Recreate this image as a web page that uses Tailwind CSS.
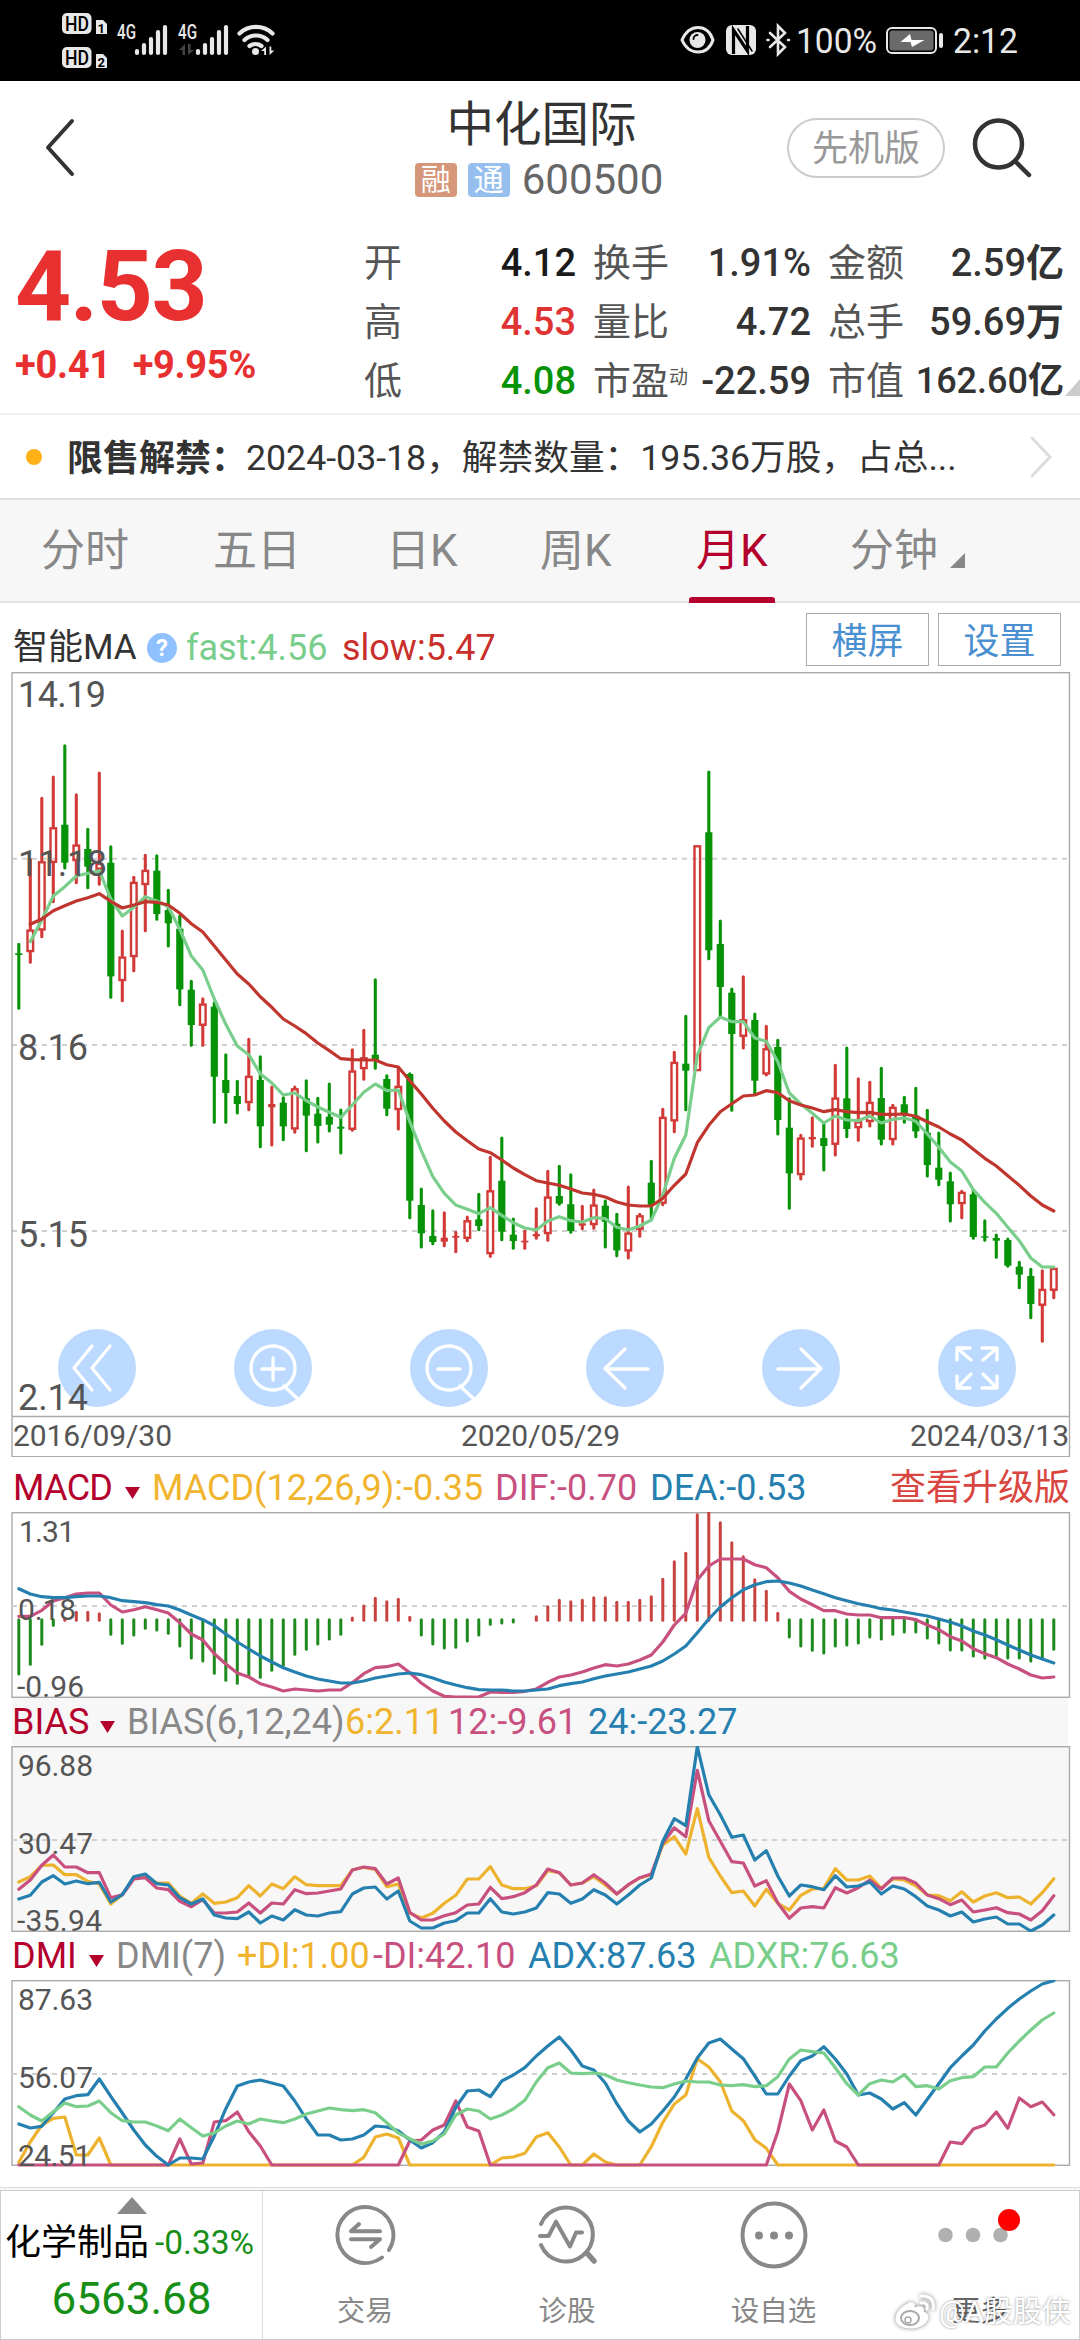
<!DOCTYPE html>
<html lang="zh-CN">
<head>
<meta charset="utf-8">
<title>中化国际 600500</title>
<script src="https://cdn.jsdelivr.net/npm/@tailwindcss/browser@4"></script>
</head>
<body class="w-[1080px] h-[2340px] overflow-hidden bg-white font-[Roboto,'Noto_Sans_CJK_SC',sans-serif] text-[#333]">
<div class="flex flex-col w-[1080px] h-[2340px]">

  <!-- status bar -->
  <div class="h-[81px] shrink-0 bg-black">
    <svg class="block" width="1080" height="81" viewBox="0 0 1080 81" fill="none" stroke-linecap="round">
      <g fill="#e8e8e8">
        <rect x="62" y="13" width="29.500" height="21" rx="5"/><rect x="62" y="47" width="29.500" height="21" rx="5"/>
        <path d="M96 20h7l4 4v10h-11zM96 54h7l4 4v10h-11z"/>
      </g>
      <g fill="#000" font-weight="500" font-family="Roboto">
        <text x="65" y="30.500" font-size="20" textLength="24" lengthAdjust="spacingAndGlyphs">HD</text>
        <text x="65" y="64.500" font-size="20" textLength="24" lengthAdjust="spacingAndGlyphs">HD</text>
        <text x="97.500" y="32.500" font-size="13" font-weight="700">1</text><text x="97.500" y="66.500" font-size="13" font-weight="700">2</text>
      </g>
      <g fill="#e8e8e8" font-size="19.500" font-weight="500" font-family="Roboto">
        <text x="117" y="38.500" textLength="19" lengthAdjust="spacingAndGlyphs">4G</text>
        <text x="178" y="38.500" textLength="19" lengthAdjust="spacingAndGlyphs">4G</text>
      </g>
      <g stroke="#e8e8e8" stroke-width="4.200">
        <path d="M137 51v2M144 45v8M151 39v14M158 32v21M165 27v26"/>
        <path d="M198 51v2M205 45v8M212 39v14M219 32v21M226 27v26"/>
        <path d="M239.500 33.500a24 24 0 0 1 33 0M244.500 40a17 17 0 0 1 23 0M249.500 46a10 10 0 0 1 12 0"/>
      </g>
      <circle cx="255.500" cy="51.500" r="3.500" fill="#e8e8e8"/>
      <path d="M261 51l5-4.500v8.500h-1.800v-4zM269.500 55v-8.500h1.800v4h3z" fill="#e8e8e8"/>
      <path d="M179 50l6-6v11h-2.500v-5zM188 55V44h2.500v6h3.500z" fill="#444"/>
      <!-- right side -->
      <path d="M682 40c4-9 10-12.500 16-12.500s12 3.500 15 12.500c-3 9-9 12-15 12s-12-3-16-12z" stroke="#e8e8e8" stroke-width="3"/>
      <circle cx="697.500" cy="40" r="8" fill="#e8e8e8"/><path d="M693.500 39a4 4 0 0 1 4-4" stroke="#000" stroke-width="1.800"/>
      <rect x="726" y="25" width="30" height="30" rx="6" fill="#e8e8e8"/>
      <path d="M733.500 54V30l14 21V26" stroke="#000" stroke-width="3.200" stroke-linecap="butt"/>
      <path d="M738 29l14 22" stroke="#000" stroke-width="1.500"/>
      <path d="M770 33l15 14-7 7V26l7 7-15 14M767.500 40h1M788 40h1" stroke="#e8e8e8" stroke-width="2.600"/>
      <text x="796" y="53" font-size="35" fill="#e8e8e8" font-family="Roboto" textLength="81" lengthAdjust="spacingAndGlyphs">100%</text>
      <rect x="887" y="28" width="49" height="25" rx="5" fill="#000" stroke="#e8e8e8" stroke-width="2"/>
      <rect x="889.500" y="30.500" width="44" height="20" rx="3" fill="#6a6a6a"/>
      <path d="M941 35v11" stroke="#e8e8e8" stroke-width="4"/>
      <path d="M910 34l1.500 6h13l-12.500 7-1.500-5h-10z" fill="#fff"/>
      <text x="953" y="53" font-size="35" fill="#e8e8e8" font-family="Roboto" textLength="65" lengthAdjust="spacingAndGlyphs">2:12</text>
    </svg>
  </div>

  <!-- title bar -->
  <header class="h-[134px] shrink-0 grid grid-cols-[360px_360px_360px]">
    <div class="pl-[43px] pt-[37px]">
      <svg width="34" height="60" viewBox="0 0 34 60" fill="none" stroke="#333" stroke-width="4" stroke-linecap="round" stroke-linejoin="round"><path d="M29 3L5 29.500L29 56"/></svg>
    </div>
    <div class="flex flex-col items-center">
      <div class="h-[48px] mt-[20px] text-[47.500px] leading-[48px] pl-[3px]">中化国际</div>
      <div class="flex items-center mt-[9px] h-[44px] pr-[2px]">
        <span class="w-[42px] h-[34px] rounded-[4px] bg-[#d5967a] text-white text-[30px] leading-[34px] text-center">融</span>
        <span class="w-[42px] h-[34px] ml-[11px] rounded-[4px] bg-[#97bfee] text-white text-[30px] leading-[34px] text-center">通</span>
        <span class="ml-[12px] text-[42px] leading-[44px] text-[#666]">600500</span>
      </div>
    </div>
    <div class="flex items-start pl-[67px] pt-[37px]">
      <span class="w-[158px] h-[60px] rounded-full border-2 border-[#ccc] text-[36px] leading-[58px] text-center text-[#999]">先机版</span>
      <svg class="ml-[25px]" width="66" height="66" viewBox="0 0 66 66" fill="none" stroke="#333" stroke-width="4.500" stroke-linecap="round"><circle cx="28.500" cy="26" r="23.500"/><path d="M45 43L59 57"/></svg>
    </div>
  </header>

  <!-- quote -->
  <section class="relative h-[200px] shrink-0 border-b-2 border-[#f0f0f0] grid grid-cols-[364px_212px_17px_218px_17px_236px]">
    <div class="pl-[15px] text-[#e93030] font-medium">
      <div class="h-[110px] mt-[17px] text-[98px] leading-[110px] font-bold tracking-[-1.500px]">4.53</div>
      <div class="mt-[3px] text-[38px] leading-[40px] whitespace-pre font-bold tracking-[-0.300px]"><span>+0.41</span><span class="ml-[22px]">+9.95%</span></div>
    </div>
    <div class="flex flex-col pt-[19px] text-[38px] leading-[59px] [&>div]:flex [&>div]:justify-between [&_b]:font-medium">
      <div><span class="text-[#555]">开</span><b class="text-[#1a1a1a]">4.12</b></div>
      <div><span class="text-[#555]">高</span><b class="text-[#e03333]">4.53</b></div>
      <div><span class="text-[#555]">低</span><b class="text-[#069406]">4.08</b></div>
    </div>
    <div></div>
    <div class="flex flex-col pt-[19px] text-[38px] leading-[59px] [&>div]:flex [&>div]:justify-between [&_b]:font-medium whitespace-nowrap">
      <div><span class="text-[#555]">换手</span><b>1.91%</b></div>
      <div><span class="text-[#555]">量比</span><b>4.72</b></div>
      <div><span class="text-[#555] flex">市盈<i class="not-italic text-[19px] leading-[52px]">动</i></span><b>-22.59</b></div>
    </div>
    <div></div>
    <div class="flex flex-col pt-[19px] text-[38px] leading-[59px] [&>div]:flex [&>div]:justify-between [&_b]:font-medium whitespace-nowrap">
      <div><span class="text-[#555]">金额</span><b>2.59<span class="font-bold">亿</span></b></div>
      <div><span class="text-[#555]">总手</span><b>59.69<span class="font-bold">万</span></b></div>
      <div><span class="text-[#555]">市值</span><b class="text-[36px]">162.60<span class="font-bold">亿</span></b></div>
    </div>
    <svg class="absolute right-0 top-[164px]" width="15" height="17"><path d="M15 0V17H0z" fill="#ccc"/></svg>
  </section>

  <!-- notice -->
  <section class="h-[83px] shrink-0 flex items-center pl-[26px] pr-[26px] text-[36px] whitespace-nowrap">
    <span class="size-[16px] rounded-full bg-[#ffb118]"></span>
    <b class="ml-[25px] w-[179px] pt-[4px] font-bold">限售解禁：</b>
    <span class="pt-[4px] text-[35.700px]">2024-03-18，解禁数量：195.36万股，占总...</span>
    <svg class="ml-auto" width="26" height="44" viewBox="0 0 26 44" fill="none" stroke="#ddd" stroke-width="3" stroke-linecap="round"><path d="M4 3L22 22L4 41"/></svg>
  </section>

  <!-- period tabs -->
  <nav class="h-[105px] shrink-0 bg-[#f7f7f7] border-y-2 border-[#e1e1e1] grid grid-cols-[172px_173px_154px_156px_154px_271px] pl-[41px] text-[44px] leading-[103px] text-[#888] whitespace-nowrap">
    <span>分时</span><span>五日</span><span>日K</span><span>周K</span>
    <span class="relative text-[#b4002d]">月K<i class="absolute left-[-7px] bottom-[0px] w-[86px] h-[6px] rounded-t-[3px] bg-[#b4002d]"></i></span>
    <span class="flex items-start">分钟<svg class="ml-[12px] mt-[53px]" width="15" height="15"><path d="M15 0V15H0z" fill="#888"/></svg></span>
  </nav>

  <!-- moving-average legend -->
  <section class="h-[69px] shrink-0 grid grid-cols-[134px_39px_156px_464px_132px_122px] pl-[13px] text-[36px] leading-[90px] whitespace-nowrap">
    <span class="text-[35px]">智能MA</span>
    <span class="mt-[30px] size-[30px] rounded-full bg-[#8fc0ff] text-white text-[24px] leading-[31px] font-bold text-center">?</span>
    <span class="text-[#79ce8b]">fast:4.56</span>
    <span class="text-[#c9302c]">slow:5.47</span>
    <span class="mt-[10px] w-[123px] h-[53px] border border-[#aaa] text-[#4a8fd0] leading-[56px] text-center">横屏</span>
    <span class="mt-[10px] w-[123px] h-[53px] border border-[#aaa] text-[#4a8fd0] leading-[56px] text-center">设置</span>
  </section>

  <svg id="main" class="block shrink-0" width="1080" height="785" viewBox="0 672 1080 785" fill="none" font-family="Roboto"></svg>

  <div class="h-[55px] shrink-0 grid grid-cols-[139px_343px_155px_240px_190px] pl-[13px] text-[36px] leading-[62px] whitespace-nowrap">
    <span class="flex text-[#b4002d]"><span class="w-[112px] tracking-[-0.700px]">MACD</span><svg class="mt-[30px]" width="15" height="13"><path d="M0 0h15L7.500 12z" fill="#b4002d"/></svg></span>
    <span class="text-[#f0b42e]">MACD(12,26,9):-0.35</span>
    <span class="text-[#c8507f]">DIF:-0.70</span>
    <span class="text-[#2580b0]">DEA:-0.53</span>
    <span class="text-[#d9453f]">查看升级版</span>
  </div>
  <svg id="macd" class="block shrink-0" width="1080" height="186" viewBox="0 1512 1080 186" fill="none" font-family="Roboto"></svg>

  <div class="h-[48px] shrink-0 mx-[12px] bg-[#f7f7f7] grid grid-cols-[115px_218px_103px_140px_240px] text-[36px] leading-[49px] whitespace-nowrap">
    <span class="flex text-[#b4002d]"><span class="w-[88px]">BIAS</span><svg class="mt-[23px]" width="15" height="13"><path d="M0 0h15L7.500 12z" fill="#b4002d"/></svg></span>
    <span class="text-[#888]">BIAS(6,12,24)</span>
    <span class="text-[#f0b42e]">6:2.11</span>
    <span class="text-[#c8507f]">12:-9.61</span>
    <span class="text-[#2580b0]">24:-23.27</span>
  </div>
  <svg id="bias" class="block shrink-0" width="1080" height="186" viewBox="0 1746 1080 186" fill="none" font-family="Roboto"></svg>

  <div class="h-[48px] shrink-0 grid grid-cols-[104px_121px_136px_155px_181px_240px] pl-[12px] text-[36px] leading-[49px] whitespace-nowrap">
    <span class="flex text-[#b4002d]"><span class="w-[77px]">DMI</span><svg class="mt-[23px]" width="15" height="13"><path d="M0 0h15L7.500 12z" fill="#b4002d"/></svg></span>
    <span class="text-[#888]">DMI(7)</span>
    <span class="text-[#f0b42e]">+DI:1.00</span>
    <span class="text-[#c8507f]">-DI:42.10</span>
    <span class="text-[#2580b0]">ADX:87.63</span>
    <span class="text-[#79ce8b]">ADXR:76.63</span>
  </div>
  <svg id="dmi" class="block shrink-0" width="1080" height="207" viewBox="0 1980 1080 207" fill="none" font-family="Roboto"></svg>

  <!-- bottom bar -->
  <footer class="relative h-[153px] shrink-0 border-t border-[#ddd] bg-[#f7f7f7] pt-[2px]">
    <div class="h-[150px] border border-[#ccc] bg-white grid grid-cols-[262px_204px_200px_213px_200px]">
      <div class="border-r border-[#ddd] flex flex-col items-center">
        <svg class="mt-[6px]" width="30" height="17"><path d="M15 0L30 17H0z" fill="#888"/></svg>
        <div class="flex items-center h-[44px] mt-[7px] text-[36px] leading-[44px] text-black whitespace-nowrap w-full pl-[4px]">化学制品<span class="ml-[6px] text-[33.500px] text-[#178f17]">-0.33%</span></div>
        <div class="h-[50px] mt-[9px] text-[44px] leading-[50px] text-[#178f17]">6563.68</div>
      </div>
      <div class="flex flex-col items-center text-[28px] text-[#888]">
        <svg class="mt-[9px]" width="70" height="70" viewBox="330 2200 70 70" fill="none" stroke="#888" stroke-width="4" stroke-linecap="round" stroke-linejoin="round"><path d="M389 2250A28 28 0 1 0 382 2257.500"/><path d="M380 2231.300H351L359 2224M351 2239.300H380L371 2247"/></svg>
        <span class="mt-[21px] leading-[42px]">交易</span>
      </div>
      <div class="flex flex-col items-center text-[28.500px] text-[#888]">
        <svg class="mt-[9px]" width="70" height="70" viewBox="533 2200 70 70" fill="none" stroke="#888" stroke-width="4" stroke-linecap="round" stroke-linejoin="round"><path d="M542 2224A27 27 0 1 1 542 2245M541 2236H549.500L557 2221.700L571 2246.500L577 2232.500H583"/><path d="M588 2253L595 2261" stroke-width="5.500"/></svg>
        <span class="mt-[21px] leading-[42px]">诊股</span>
      </div>
      <div class="flex flex-col items-center text-[28.500px] text-[#888]">
        <svg class="mt-[9px]" width="70" height="70" viewBox="737 2200 70 70" fill="#888"><circle cx="772" cy="2235" r="31.500" fill="none" stroke="#888" stroke-width="4"/><circle cx="757" cy="2235.500" r="4"/><circle cx="772" cy="2235.500" r="4"/><circle cx="787" cy="2235.500" r="4"/></svg>
        <span class="mt-[21px] leading-[42px]">设自选</span>
      </div>
      <div class="flex flex-col items-center text-[28px] text-[#666]">
        <svg class="mt-[9px]" width="90" height="70" viewBox="934 2200 90 70"><g fill="#b0b0b0"><circle cx="944.500" cy="2235" r="7.300"/><circle cx="972" cy="2235" r="7.300"/><circle cx="999.500" cy="2235" r="7.300"/></g><circle cx="1008" cy="2220" r="11" fill="#f00"/></svg>
        <span class="mt-[21px] leading-[42px]">更多</span>
      </div>
    </div>
    <div class="absolute left-[893px] top-[105px] flex items-center text-white text-[29px] leading-[38px] whitespace-nowrap">
      <svg class="drop-shadow-[0_0_2px_rgba(0,0,0,0.5)]" width="42" height="38" viewBox="0 0 42 38" fill="none" stroke="#fff" stroke-linecap="round"><path d="M17 10c-9 3-14 10-14 16 0 6 7 9 15 9 9 0 17-5 17-11 0-3-2-4-5-5 2-4-1-7-9-4 1-4 0-6-4-5z" fill="#fff"/><ellipse cx="17" cy="25" rx="9" ry="7" stroke="#aaa" stroke-width="2"/><circle cx="15" cy="27" r="3" stroke="#aaa" stroke-width="1.500"/><path d="M28 10c5-1 7 2 6 6M28 3c9-1 14 5 12 13" stroke-width="3"/></svg>
      <span class="ml-[4px] [text-shadow:0_0_3px_rgba(0,0,0,.45)]">@A股股侠</span>
    </div>
  </footer>
</div>

<script>
const X0 = 18.8, STEP = 11.5;
const x = i => +(X0 + i * STEP).toFixed(1);
const RED = '#d23a38', GREEN = '#079307';
const PINK = '#c8507f', BLUE = '#2580b0', YELLOW = '#edb32f', MINT = '#79ce8b';

const line = (vals, base, color, start = 0) =>
  `<polyline points="${vals.map((v, i) => x(i + start) + ',' + (base + v / 3).toFixed(1)).join(' ')}" stroke="${color}" stroke-width="3.2" stroke-linejoin="round" stroke-linecap="round"/>`;
const grid = y => `<path d="M12 ${y}H1069" stroke="#cfcfcf" stroke-width="2" stroke-dasharray="5 5"/>`;
const label = (t, lx, y, w, size) =>
  `<text x="${lx}" y="${y}" font-size="${size}" fill="#555" textLength="${w}">${t}</text>`;
const frame = (y, h, fill) => `<rect x="12" y="${y}" width="1058" height="${h}" fill="${fill}" stroke="none"/>`;
const border = (y, h) => `<rect x="12" y="${y}" width="1057.5" height="${h}" stroke="#aaa" stroke-width="1.4"/>`;

// high, body top, body bottom, low, colour (r up / g down)
const candles = [
[730,760,765,928,'g'],[475,690,755,790,'r'],[292,485,690,713,'r'],[228,383,487,608,'r'],[134,374,488,507,'g'],
[281,435,482,551,'r'],[385,447,500,566,'g'],[216,490,508,556,'r'],[437,488,829,895,'g'],[690,771,842,905,'r'],
[529,547,770,815,'r'],[463,511,554,695,'r'],[464,512,642,661,'g'],[568,630,670,741,'g'],[646,686,868,917,'g'],
[841,869,975,1039,'g'],[893,912,976,1039,'r'],[905,920,1130,1270,'g'],[1061,1140,1179,1270,'g'],[1141,1188,1212,1242,'g'],
[1015,1129,1208,1232,'r'],[1067,1140,1279,1343,'g'],[1158,1212,1222,1338,'r'],[1190,1208,1279,1322,'g'],[1158,1166,1287,1300,'r'],
[1139,1195,1247,1355,'g'],[1192,1241,1278,1329,'g'],[1149,1250,1274,1296,'g'],[1227,1280,1286,1362,'g'],[1046,1113,1288,1293,'r'],
[988,1073,1106,1141,'r'],[836,1064,1080,1108,'g'],[1124,1137,1226,1247,'g'],[1100,1159,1229,1290,'r'],[1118,1122,1502,1556,'g'],
[1464,1515,1600,1644,'g'],[1529,1608,1626,1634,'g'],[1535,1613,1625,1640,'r'],[1594,1608,1613,1658,'r'],[1548,1562,1615,1625,'r'],
[1480,1558,1578,1592,'g'],[1369,1472,1661,1672,'r'],[1311,1442,1595,1622,'g'],[1554,1604,1623,1648,'g'],[1590,1622,1627,1648,'r'],
[1523,1602,1609,1618,'r'],[1411,1491,1601,1624,'r'],[1396,1488,1511,1516,'g'],[1421,1513,1593,1600,'g'],[1516,1570,1577,1589,'r'],
[1467,1515,1574,1588,'r'],[1500,1517,1565,1644,'g'],[1540,1571,1651,1670,'g'],[1458,1599,1653,1677,'r'],[1540,1547,1588,1612,'r'],
[1381,1448,1515,1560,'g'],[1225,1252,1510,1517,'r'],[1054,1087,1263,1298,'r'],[946,1091,1112,1232,'g'],[437,437,1112,1112,'r'],
[213,397,751,779,'g'],[660,732,861,953,'g'],[864,878,1002,1234,'g'],[827,959,1009,1047,'r'],[939,960,1142,1183,'g'],
[976,1046,1122,1128,'r'],[1018,1041,1260,1305,'g'],[1193,1283,1420,1528,'g'],[1303,1314,1424,1440,'r'],[1250,1311,1318,1342,'r'],
[1267,1314,1338,1413,'g'],[1093,1194,1333,1368,'r'],[1041,1195,1287,1313,'g'],[1133,1265,1283,1324,'r'],[1144,1207,1265,1281,'r'],
[1102,1194,1319,1335,'g'],[1213,1222,1319,1335,'r'],[1189,1213,1240,1270,'g'],[1162,1247,1294,1313,'g'],[1228,1298,1395,1431,'g'],
[1296,1403,1439,1457,'g'],[1416,1444,1513,1566,'g'],[1471,1477,1511,1556,'r'],[1467,1483,1611,1618,'g'],[1559,1609,1613,1624,'g'],
[1602,1614,1622,1675,'g'],[1614,1620,1697,1702,'g'],[1684,1700,1724,1766,'g'],[1705,1728,1812,1856,'g'],[1709,1768,1816,1927,'r'],
[1705,1705,1771,1796,'r']];
const fast = [725,660,588,560,528,520,512,597,648,622,590,603,620,688,768,810,897,973,1038,1064,1121,1149,1185,1179,1202,1221,1237,1252,1215,1177,1152,1172,1170,1265,1352,1430,1480,1515,1528,1541,1523,1546,1568,1584,1590,1563,1550,1562,1566,1553,1556,1582,1590,1578,1560,1485,1375,1305,1066,983,951,965,965,1014,1024,1085,1179,1212,1240,1269,1248,1260,1262,1248,1269,1258,1254,1264,1302,1342,1386,1413,1469,1507,1540,1582,1622,1674,1701,1701];
const slow = [673,657,632,617,603,593,581,604,624,615,605,607,615,640,671,696,738,780,822,852,890,922,957,978,1001,1029,1052,1076,1079,1080,1080,1094,1101,1142,1182,1225,1263,1296,1322,1347,1358,1380,1404,1424,1442,1449,1456,1467,1479,1483,1491,1506,1515,1518,1518,1495,1456,1422,1328,1276,1235,1211,1188,1185,1172,1178,1202,1215,1224,1235,1229,1235,1238,1237,1243,1243,1242,1249,1265,1281,1302,1320,1348,1375,1398,1427,1456,1488,1515,1533];

let s = grid(858.7) + grid(1045) + grid(1231);
candles.forEach(([h, t, b, l, c], i) => {
  const Y = v => +(700 + v / 3).toFixed(1), cx = x(i), col = c === 'r' ? RED : GREEN;
  const wick = (a, z) => z - a > 1 ? `<path d="M${cx} ${Y(a) + 1}V${Y(z) - 1}" stroke="${col}" stroke-width="3.1" stroke-linecap="round"/>` : '';
  if (c === 'g' || b - t < 14) {
    s += wick(h, l) + `<rect x="${cx - 3.6}" y="${Y(t)}" width="7.2" height="${Math.max(1.4, (b - t) / 3)}" fill="${col}"/>`;
  } else {
    s += wick(h, t) + wick(b, l) + `<rect x="${cx - 2.8}" y="${Y(t) + .6}" width="5.6" height="${(b - t) / 3 - 1.2}" stroke="${col}" stroke-width="2.4"/>`;
  }
});
s += line(fast, 700, MINT, 1) + line(slow, 700, '#c0362f', 1);

// round chart controls
const icons = [
  'M-5 -22L-23 0L-5 22M13 -22L-5 0L13 22',
  'M11 18L26 32M-11 1H11M0 -10V12',
  'M11 18L26 32M-11 1H11',
  'M23 1H-19M0 -19L-20 0.500L0 20',
  'M-23 1H19M0 -19L20 0.500L0 20',
  ''];
icons.forEach((d, k) => {
  const cx = 97 + 176 * k;
  s += `<g transform="translate(${cx} 1368)"><circle r="39" fill="#bcdaff"/><g stroke="#fff" stroke-width="3.3" stroke-linecap="round" stroke-linejoin="round">`;
  if (k === 1 || k === 2) s += '<circle cx="0" cy="0" r="22"/>';
  if (k === 5) s += '<path d="M-20 -8V-20H-7M-20 -20L-6 -8M20 -8V-20H5M20 -20L6 -8M-20 8V20H-7M-20 20L-6 6M20 8V20H5M20 20L6 6"/>';
  s += `<path d="${d}"/></g></g>`;
});
s += label('14.19', 18, 707, 88, 36) + label('11.18', 18, 876, 89, 36) + label('8.16', 18, 1060, 70, 36) + label('5.15', 18, 1247, 70, 36) + label('2.14', 18, 1410, 70, 36);
s += `<path d="M12 1416.500H1070" stroke="#aaa" stroke-width="1.400"/>` + border(672.7, 784);
s += label('2016/09/30', 13, 1445.5, 159, 30) + label('2020/05/29', 461, 1445.5, 159, 30) + label('2024/03/13', 910, 1445.5, 159, 30);
document.getElementById('main').innerHTML = s;

// MACD
const bars = [524,495,435,378,-353,-335,-335,-339,405,432,407,387,392,402,440,476,485,522,543,552,528,534,513,498,465,450,434,419,405,-352,-316,-293,-303,-296,-350,407,434,446,444,425,407,375,371,368,0,-348,-318,-299,-303,-299,-291,-291,-305,-305,-299,-288,-236,-183,-158,-42,-36,-66,-126,-168,-237,-272,-338,413,440,453,461,440,437,431,413,419,405,398,398,416,431,452,452,470,476,470,476,476,485,476,450];
const dif = [349,349,331,303,293,282,279,279,315,336,329,320,329,339,368,402,420,461,492,519,531,551,561,573,567,570,573,570,570,548,521,503,500,492,518,549,573,589,591,591,591,576,577,577,574,567,547,531,525,516,504,494,498,492,480,465,426,375,340,240,198,177,177,177,194,203,233,274,297,314,332,332,342,345,345,353,353,353,359,375,389,410,423,446,461,473,492,507,525,534,531];
const dea = [266,282,290,293,293,290,288,288,293,302,305,308,314,318,330,345,359,377,402,426,447,468,486,503,516,528,537,543,549,549,543,534,528,522,519,524,534,546,555,563,569,570,570,573,573,570,567,557,551,546,536,528,522,516,507,498,483,462,438,398,357,321,293,269,254,245,243,249,258,270,281,293,302,311,318,326,330,336,342,348,357,366,378,393,405,419,435,450,465,477,489];
s = border(1512.7, 184.6) + grid(1606);
bars.forEach((v, i) => {
  if (!v) return;
  const [a, z, c] = v > 0 ? [359, v - 2, '#1c8a1c'] : [-v + 2, 361, '#c8423f'];
  s += `<path d="M${x(i)} ${1500 + a / 3}V${1500 + z / 3}" stroke="${c}" stroke-width="3" stroke-linecap="round"/>`;
});
s += line(dif, 1500, PINK) + line(dea, 1500, BLUE);
s += label('1.31', 19, 1542, 56, 30) + label('0.18', 18, 1620, 58, 30) + label('-0.96', 17, 1697, 67, 30);
document.getElementById('macd').innerHTML = s;

// BIAS
const b6 = [1146,1130,1096,1095,1124,1124,1144,1152,1212,1184,1135,1130,1149,1149,1188,1210,1182,1210,1206,1193,1157,1188,1152,1166,1130,1154,1157,1157,1157,1110,1102,1108,1160,1152,1240,1254,1240,1210,1186,1137,1137,1100,1155,1166,1166,1157,1112,1118,1155,1149,1130,1155,1182,1155,1134,1124,1035,1010,1062,926,1072,1128,1178,1173,1218,1168,1210,1230,1186,1167,1165,1106,1140,1140,1128,1165,1137,1140,1157,1185,1187,1202,1175,1206,1188,1178,1193,1191,1212,1178,1136];
const b12 = [1168,1140,1096,1065,1101,1101,1118,1118,1193,1184,1137,1133,1164,1169,1204,1220,1199,1239,1239,1236,1209,1239,1209,1212,1169,1181,1179,1173,1167,1110,1101,1106,1152,1134,1237,1260,1260,1247,1238,1215,1212,1162,1196,1190,1178,1155,1107,1118,1155,1149,1124,1149,1182,1154,1133,1122,1030,983,1010,811,962,1024,1085,1089,1158,1142,1209,1255,1224,1220,1224,1163,1179,1163,1140,1167,1134,1134,1149,1185,1196,1214,1200,1236,1230,1223,1238,1242,1260,1232,1187];
const b24 = [1197,1186,1146,1127,1152,1143,1151,1147,1206,1184,1130,1122,1151,1155,1193,1212,1197,1245,1254,1256,1236,1269,1248,1260,1229,1245,1248,1239,1235,1182,1164,1161,1197,1173,1263,1284,1284,1269,1262,1239,1239,1196,1236,1242,1236,1224,1178,1182,1210,1197,1169,1185,1212,1185,1155,1134,1024,956,977,740,884,944,1012,1005,1080,1052,1128,1188,1155,1160,1169,1127,1161,1158,1146,1182,1158,1167,1190,1218,1230,1248,1236,1266,1257,1251,1272,1272,1293,1275,1245];
s = frame(1746, 186, '#f7f7f7') + border(1746.7, 184.6) + grid(1840);
s += line(b6, 1500, YELLOW) + line(b12, 1500, PINK) + line(b24, 1500, BLUE);
s += label('96.88', 18, 1776, 75, 30) + label('30.47', 18, 1854, 75, 30) + label('-35.94', 17, 1931, 85, 30);
document.getElementById('bias').innerHTML = s;

// DMI
const Z = n => Array(n).fill(705);
const adx = [582,594,589,548,507,497,494,447,499,549,600,645,679,705,684,684,687,618,536,468,456,450,459,468,513,567,615,615,630,627,615,588,591,602,630,654,638,606,532,483,480,500,453,435,413,378,348,321,360,408,420,459,521,573,606,582,543,501,447,384,339,327,357,386,438,492,492,438,392,378,350,387,432,495,489,507,537,518,555,508,461,413,378,345,303,267,235,207,183,162,152];
const adxr = [530,555,573,545,519,530,528,513,548,572,576,576,588,602,567,593,618,609,588,573,582,567,573,578,567,552,543,534,539,542,539,548,578,609,626,642,633,612,555,537,543,567,555,537,511,456,413,399,429,431,429,434,450,458,465,471,473,462,453,456,456,465,467,464,470,467,440,387,360,365,369,413,461,495,461,450,456,434,470,467,477,452,443,440,411,411,369,333,300,270,249];
const pdi = [697,636,585,565,561,675,675,624,...Z(22),682,621,612,624,...Z(8),684,681,670,621,608,651,705,705,672,696,705,705,705,650,577,522,495,386,411,455,543,572,629,655,...Z(25)];
const mdi = [...Z(14),627,702,699,576,572,546,605,648,...Z(12),633,630,600,585,513,591,603,...Z(25),605,462,512,600,540,633,651,...Z(8),636,641,597,585,546,595,504,530,516,554];
s = border(1980.7, 184.6) + grid(2074);
s += line(pdi, 1930, YELLOW);
s += line(mdi, 1930, PINK) + line(adx, 1930, BLUE) + line(adxr, 1930, MINT);
s += label('87.63', 18, 2010, 75, 30) + label('56.07', 18, 2088, 75, 30) + label('24.51', 18, 2166, 73, 30);
document.getElementById('dmi').innerHTML = s;
</script>
</body>
</html>
